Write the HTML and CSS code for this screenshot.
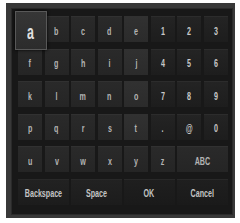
FILE: index.html
```html
<!DOCTYPE html>
<html>
<head>
<meta charset="utf-8">
<link rel="stylesheet" href="styles.css">
</head>
<body>
<div class="panel">
  <div class="inner">
    <div class="keys">
      <div class="key focus"><span>a</span></div>
      <div class="key"><span>b</span></div>
      <div class="key"><span>c</span></div>
      <div class="key"><span>d</span></div>
      <div class="key lite"><span>e</span></div>
      <div class="key num"><span>1</span></div>
      <div class="key num"><span>2</span></div>
      <div class="key num"><span>3</span></div>

      <div class="key"><span>f</span></div>
      <div class="key"><span>g</span></div>
      <div class="key"><span>h</span></div>
      <div class="key"><span>i</span></div>
      <div class="key lite"><span>j</span></div>
      <div class="key num"><span>4</span></div>
      <div class="key num"><span>5</span></div>
      <div class="key num"><span>6</span></div>

      <div class="key"><span>k</span></div>
      <div class="key"><span>l</span></div>
      <div class="key"><span>m</span></div>
      <div class="key"><span>n</span></div>
      <div class="key lite"><span>o</span></div>
      <div class="key num"><span>7</span></div>
      <div class="key num"><span>8</span></div>
      <div class="key num"><span>9</span></div>

      <div class="key"><span>p</span></div>
      <div class="key"><span>q</span></div>
      <div class="key"><span>r</span></div>
      <div class="key"><span>s</span></div>
      <div class="key lite"><span>t</span></div>
      <div class="key num"><span>.</span></div>
      <div class="key num"><span>@</span></div>
      <div class="key num"><span>0</span></div>

      <div class="key"><span>u</span></div>
      <div class="key"><span>v</span></div>
      <div class="key"><span>w</span></div>
      <div class="key"><span>x</span></div>
      <div class="key"><span>y</span></div>
      <div class="key"><span>z</span></div>
      <div class="key wide"><span>ABC</span></div>

      <div class="key wide word"><span>Backspace</span></div>
      <div class="key wide word"><span>Space</span></div>
      <div class="key wide word dark"><span>OK</span></div>
      <div class="key wide word dark"><span>Cancel</span></div>
    </div>
  </div>
</div>
</body>
</html>
```

FILE: styles.css
```css
html, body {
  margin: 0;
  padding: 0;
  background: #ffffff;
}

.panel {
  margin: 3px 0 0 6px;
  width: 229px;
  height: 215px;
  box-sizing: border-box;
  background: #383838;
  padding: 5px 2px 3px 5px;
}

.inner {
  width: 100%;
  height: 100%;
  box-sizing: border-box;
  background: #181818;
  border: 1px solid #2a2a2a;
  padding: 7px 0 0 6px;
}

.keys {
  display: grid;
  grid-template-columns: repeat(8, 24px);
  grid-template-rows: repeat(6, 26px);
  column-gap: 2.5px;
  row-gap: 6.6px;
}

.key {
  display: flex;
  align-items: center;
  justify-content: center;
  background: linear-gradient(#2a2a2a, #252525);
  box-shadow: inset 0 1px 0 #313131;
  color: #b4b4b4;
  font-family: "Liberation Sans", Arial, sans-serif;
  font-weight: bold;
  font-size: 10.5px;
  padding-top: 3px;
  box-sizing: border-box;
}

.key span {
  display: inline-block;
  transform: scaleX(0.68);
}

.key.lite {
  background: linear-gradient(#313131, #2b2b2b);
}

.key.num {
  background: linear-gradient(#242424, #1d1d1d);
  box-shadow: inset 0 1px 0 #2c2c2c;
  color: #c8c8c8;
}

.key.wide {
  grid-column: span 2;
}

.key.word {
  font-size: 10.5px;
  background: linear-gradient(#222222, #1c1c1c);
  box-shadow: inset 0 1px 0 #282828;
  color: #c4c4c4;
}

.key.word span {
  transform: scaleX(0.68);
}

.key.dark {
  background: linear-gradient(#1f1f1f, #1a1a1a);
}

.key.focus {
  margin: -5px -5px -8px -3px;
  position: relative;
  z-index: 1;
  background: linear-gradient(#363636, #2c2c2c);
  border: 1px solid #585858;
  box-shadow: 0 0 3px #000;
  font-size: 20px;
  color: #e0e0e0;
  padding-top: 4px;
}

.key.focus span {
  transform: scaleX(0.62);
}
```
